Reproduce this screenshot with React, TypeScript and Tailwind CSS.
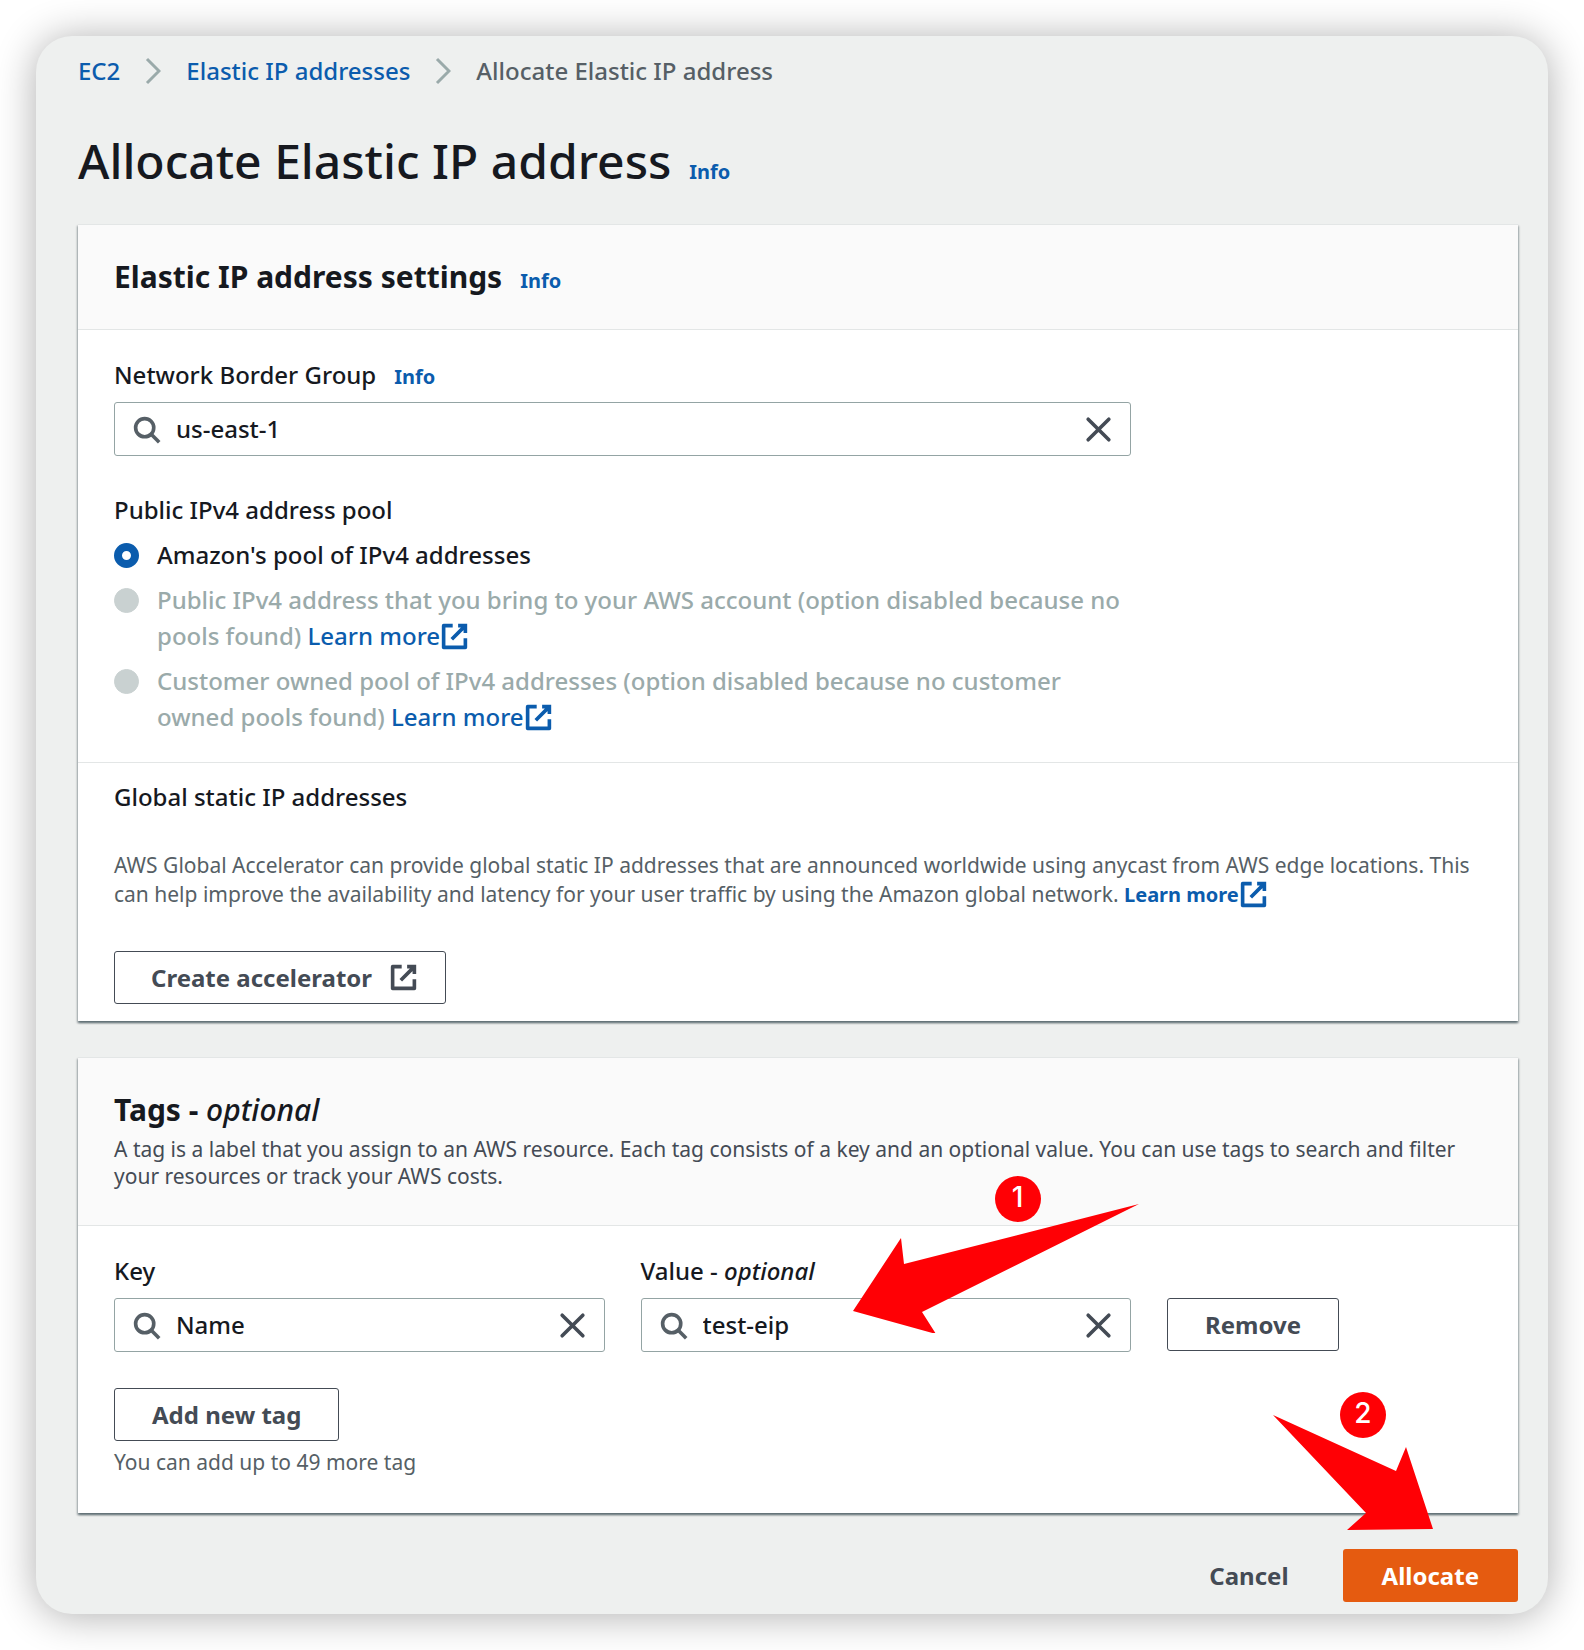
import { useState } from "react";
import type { ReactNode } from "react";

const stroke = { fill: "none", stroke: "currentColor", strokeWidth: 2 };

function SearchIcon() {
  return (
    <svg viewBox="0 0 16 16" className="size-[29px] shrink-0 text-[#565f66]" aria-hidden="true" {...stroke}>
      <circle cx="7" cy="7" r="5" />
      <path d="m10.6 10.6 4.4 4.4" />
    </svg>
  );
}

function CloseIcon() {
  return (
    <svg viewBox="0 0 16 16" className="size-[29px]" aria-hidden="true" {...stroke} strokeLinecap="round">
      <path d="m2.3 2.3 11.4 11.4M13.7 2.3 2.3 13.7" />
    </svg>
  );
}

function ExternalIcon() {
  return (
    <svg viewBox="0 0 16 16" className="size-[29px] shrink-0" aria-hidden="true" {...stroke}>
      <path d="M10 2h4v4M6.5 9.5 14 2" />
      <path d="M14 9v5H2V2h5" strokeLinejoin="round" />
    </svg>
  );
}

function ChevronIcon() {
  return (
    <svg viewBox="0 0 16 28" className="h-7 w-4 shrink-0 text-[#9aaaaa]" aria-hidden="true" {...stroke} strokeWidth={3}>
      <path d="m2 2 12 12L2 26" />
    </svg>
  );
}

function InfoLink() {
  return (
    <a href="#info" className="text-[20px] leading-6 font-bold text-[#0b5cad]">
      Info
    </a>
  );
}

function LearnMore({ className = "" }: { className?: string }) {
  return (
    <a href="#learn-more" className={`inline-flex items-center align-top text-[#0b5cad] ${className}`}>
      Learn more
      <ExternalIcon />
    </a>
  );
}

function SearchField({ id, initial }: { id: string; initial: string }) {
  const [value, setValue] = useState(initial);
  return (
    <div className="mt-[9px] flex h-[54px] items-center gap-[15px] rounded-[3px] border border-[#94a4a4] bg-white px-[17px]">
      <SearchIcon />
      <input
        id={id}
        type="text"
        value={value}
        onChange={(e) => setValue(e.target.value)}
        className="min-w-0 flex-1 bg-transparent leading-9 outline-none"
      />
      <button type="button" aria-label="Clear" onClick={() => setValue("")} className="text-[#444b55]">
        <CloseIcon />
      </button>
    </div>
  );
}

function OutlineButton({ children, className = "px-[37px]" }: { children: ReactNode; className?: string }) {
  return (
    <button
      type="button"
      className={`inline-flex h-[53px] items-center gap-[17px] rounded-[3px] border border-[#444b55] bg-white font-bold text-[#444b55] ${className}`}
    >
      {children}
    </button>
  );
}

function Card({ header, children }: { header: ReactNode; children: ReactNode }) {
  return (
    <section className="border-t border-[#e3e6e6] bg-white shadow-[0_2px_2px_rgba(0,28,36,0.3),1px_2px_2px_rgba(0,28,36,0.25),-1px_2px_2px_rgba(0,28,36,0.25)]">
      <header className="border-b border-[#e3e6e6] bg-[#fafafa] px-9 pt-8">{header}</header>
      {children}
    </section>
  );
}

function PoolOption({ id, disabled = false, children }: { id: string; disabled?: boolean; children: ReactNode }) {
  return (
    <div className="flex gap-[18px]">
      <input
        id={id}
        type="radio"
        name="pool"
        defaultChecked={!disabled}
        disabled={disabled}
        className="mt-[6px] size-[25px] shrink-0 appearance-none rounded-full border border-[#94a4a4] checked:border-8 checked:border-[#0b5cad] disabled:border-[#c9d1d1] disabled:bg-[#c9d1d1]"
      />
      <label htmlFor={id} className={disabled ? "text-[#9aaaaa]" : ""}>
        {children}
      </label>
    </div>
  );
}

function StepBadge({ n, className }: { n: number; className: string }) {
  return (
    <span
      className={`pointer-events-none absolute z-20 flex size-[46px] items-center justify-center rounded-full bg-[#ff0005] pb-1 font-['Inter',sans-serif] text-[28px] font-medium leading-none text-white ${className}`}
    >
      {n}
    </span>
  );
}

export default function App() {
  return (
    <div className="bg-white p-9 font-['Noto_Sans',sans-serif] text-[24px] leading-9 font-medium text-[#16191f]">
      <main className="rounded-[36px] bg-[#eef0ef] pt-[17px] pr-[30px] pb-[12px] pl-[42px] shadow-[0_2px_40px_rgba(0,0,0,0.32)]">
        <nav aria-label="Breadcrumb">
          <ol className="flex items-center gap-[25px]">
            <li>
              <a href="#ec2" className="text-[#0b5cad]">EC2</a>
            </li>
            <li><ChevronIcon /></li>
            <li>
              <a href="#addresses" className="text-[#0b5cad]">Elastic IP addresses</a>
            </li>
            <li><ChevronIcon /></li>
            <li className="text-[#565f66]">Allocate Elastic IP address</li>
          </ol>
        </nav>

        <div className="mt-[42px] mb-[33px] flex items-baseline gap-[18px]">
          <h1 className="text-[48px] leading-[60px]">Allocate Elastic IP address</h1>
          <InfoLink />
        </div>

        <Card
          header={
            <div className="flex items-baseline gap-[18px] pb-8">
              <h2 className="text-[30px] leading-10 font-bold">Elastic IP address settings</h2>
              <InfoLink />
            </div>
          }
        >
          <div className="grid grid-cols-8 gap-9 px-9 pt-[27px] pb-[27px]">
            <div className="col-span-6">
              <div className="flex items-baseline gap-[18px]">
                <label htmlFor="border-group">Network Border Group</label>
                <InfoLink />
              </div>
              <SearchField id="border-group" initial="us-east-1" />
            </div>
            <fieldset className="col-span-6 flex flex-col gap-[9px]">
              <legend className="mb-[9px]">Public IPv4 address pool</legend>
              <PoolOption id="pool-amazon">Amazon's pool of IPv4 addresses</PoolOption>
              <PoolOption id="pool-byoip" disabled>
                Public IPv4 address that you bring to your AWS account (option disabled because no pools found) <LearnMore />
              </PoolOption>
              <PoolOption id="pool-customer" disabled>
                Customer owned pool of IPv4 addresses (option disabled because no customer owned pools found) <LearnMore />
              </PoolOption>
            </fieldset>
          </div>

          <div className="border-t border-[#e3e6e6] px-9 pt-4 pb-[17px]">
            <h3>Global static IP addresses</h3>
            <p className="mt-9 mb-[42px] text-[21px] leading-[29px] font-normal text-[#565f66]">
              AWS Global Accelerator can provide global static IP addresses that are announced worldwide using anycast from
              AWS edge locations. This can help improve the availability and latency for your user traffic by using the
              Amazon global network. <LearnMore className="text-[20px] font-bold" />
            </p>
            <OutlineButton className="pr-[27px] pl-9">
              Create accelerator
              <ExternalIcon />
            </OutlineButton>
          </div>
        </Card>

        <div className="h-9" />

        <Card
          header={
            <div className="pb-[35px]">
              <h2 className="text-[30px] leading-10 font-bold">
                Tags - <em className="font-medium">optional</em>
              </h2>
              <p className="mt-[6px] text-[21px] leading-[27px] font-normal text-[#444b55]">
                A tag is a label that you assign to an AWS resource. Each tag consists of a key and an optional value. You
                can use tags to search and filter your resources or track your AWS costs.
              </p>
            </div>
          }
        >
          <div className="px-9 pt-[27px] pb-9">
            <div className="grid grid-cols-8 items-end gap-9">
              <div className="col-span-3">
                <label htmlFor="tag-key" className="block">Key</label>
                <SearchField id="tag-key" initial="Name" />
              </div>
              <div className="relative col-span-3">
                <label htmlFor="tag-value" className="block">
                  Value - <em>optional</em>
                </label>
                <SearchField id="tag-value" initial="test-eip" />
                <svg
                  viewBox="0 0 286 129"
                  className="pointer-events-none absolute -top-[49px] left-[212px] z-10 h-[129px] w-[286px] fill-[#ff0005]"
                  aria-hidden="true"
                >
                  <path d="M286 0 51 60 48 34 0 107l83 23-14-22z" />
                </svg>
                <StepBadge n={1} className="-top-[77px] left-[354px]" />
              </div>
              <div className="col-span-2 flex pb-px">
                <OutlineButton>Remove</OutlineButton>
              </div>
            </div>
            <div className="mt-9 flex">
              <OutlineButton>Add new tag</OutlineButton>
            </div>
            <p className="mt-[7px] text-[21px] leading-[29px] font-normal text-[#565f66]">You can add up to 49 more tag</p>
          </div>
        </Card>

        <div className="mt-9 flex justify-end gap-[18px]">
          <button type="button" className="h-[53px] px-9 font-bold text-[#444b55]">
            Cancel
          </button>
          <div className="relative">
            <button type="button" className="h-[53px] rounded-[3px] bg-[#e55b10] px-[39px] font-bold text-white">
              Allocate
            </button>
            <svg
              viewBox="0 0 160 115"
              className="pointer-events-none absolute -top-[134px] right-[85px] z-10 h-[115px] w-[160px] fill-[#ff0005]"
              aria-hidden="true"
            >
              <path d="m0 0 123 56 10-24 27 82-86 1 19-17z" />
            </svg>
            <StepBadge n={2} className="-top-[157px] right-[132px]" />
          </div>
        </div>
      </main>
    </div>
  );
}
